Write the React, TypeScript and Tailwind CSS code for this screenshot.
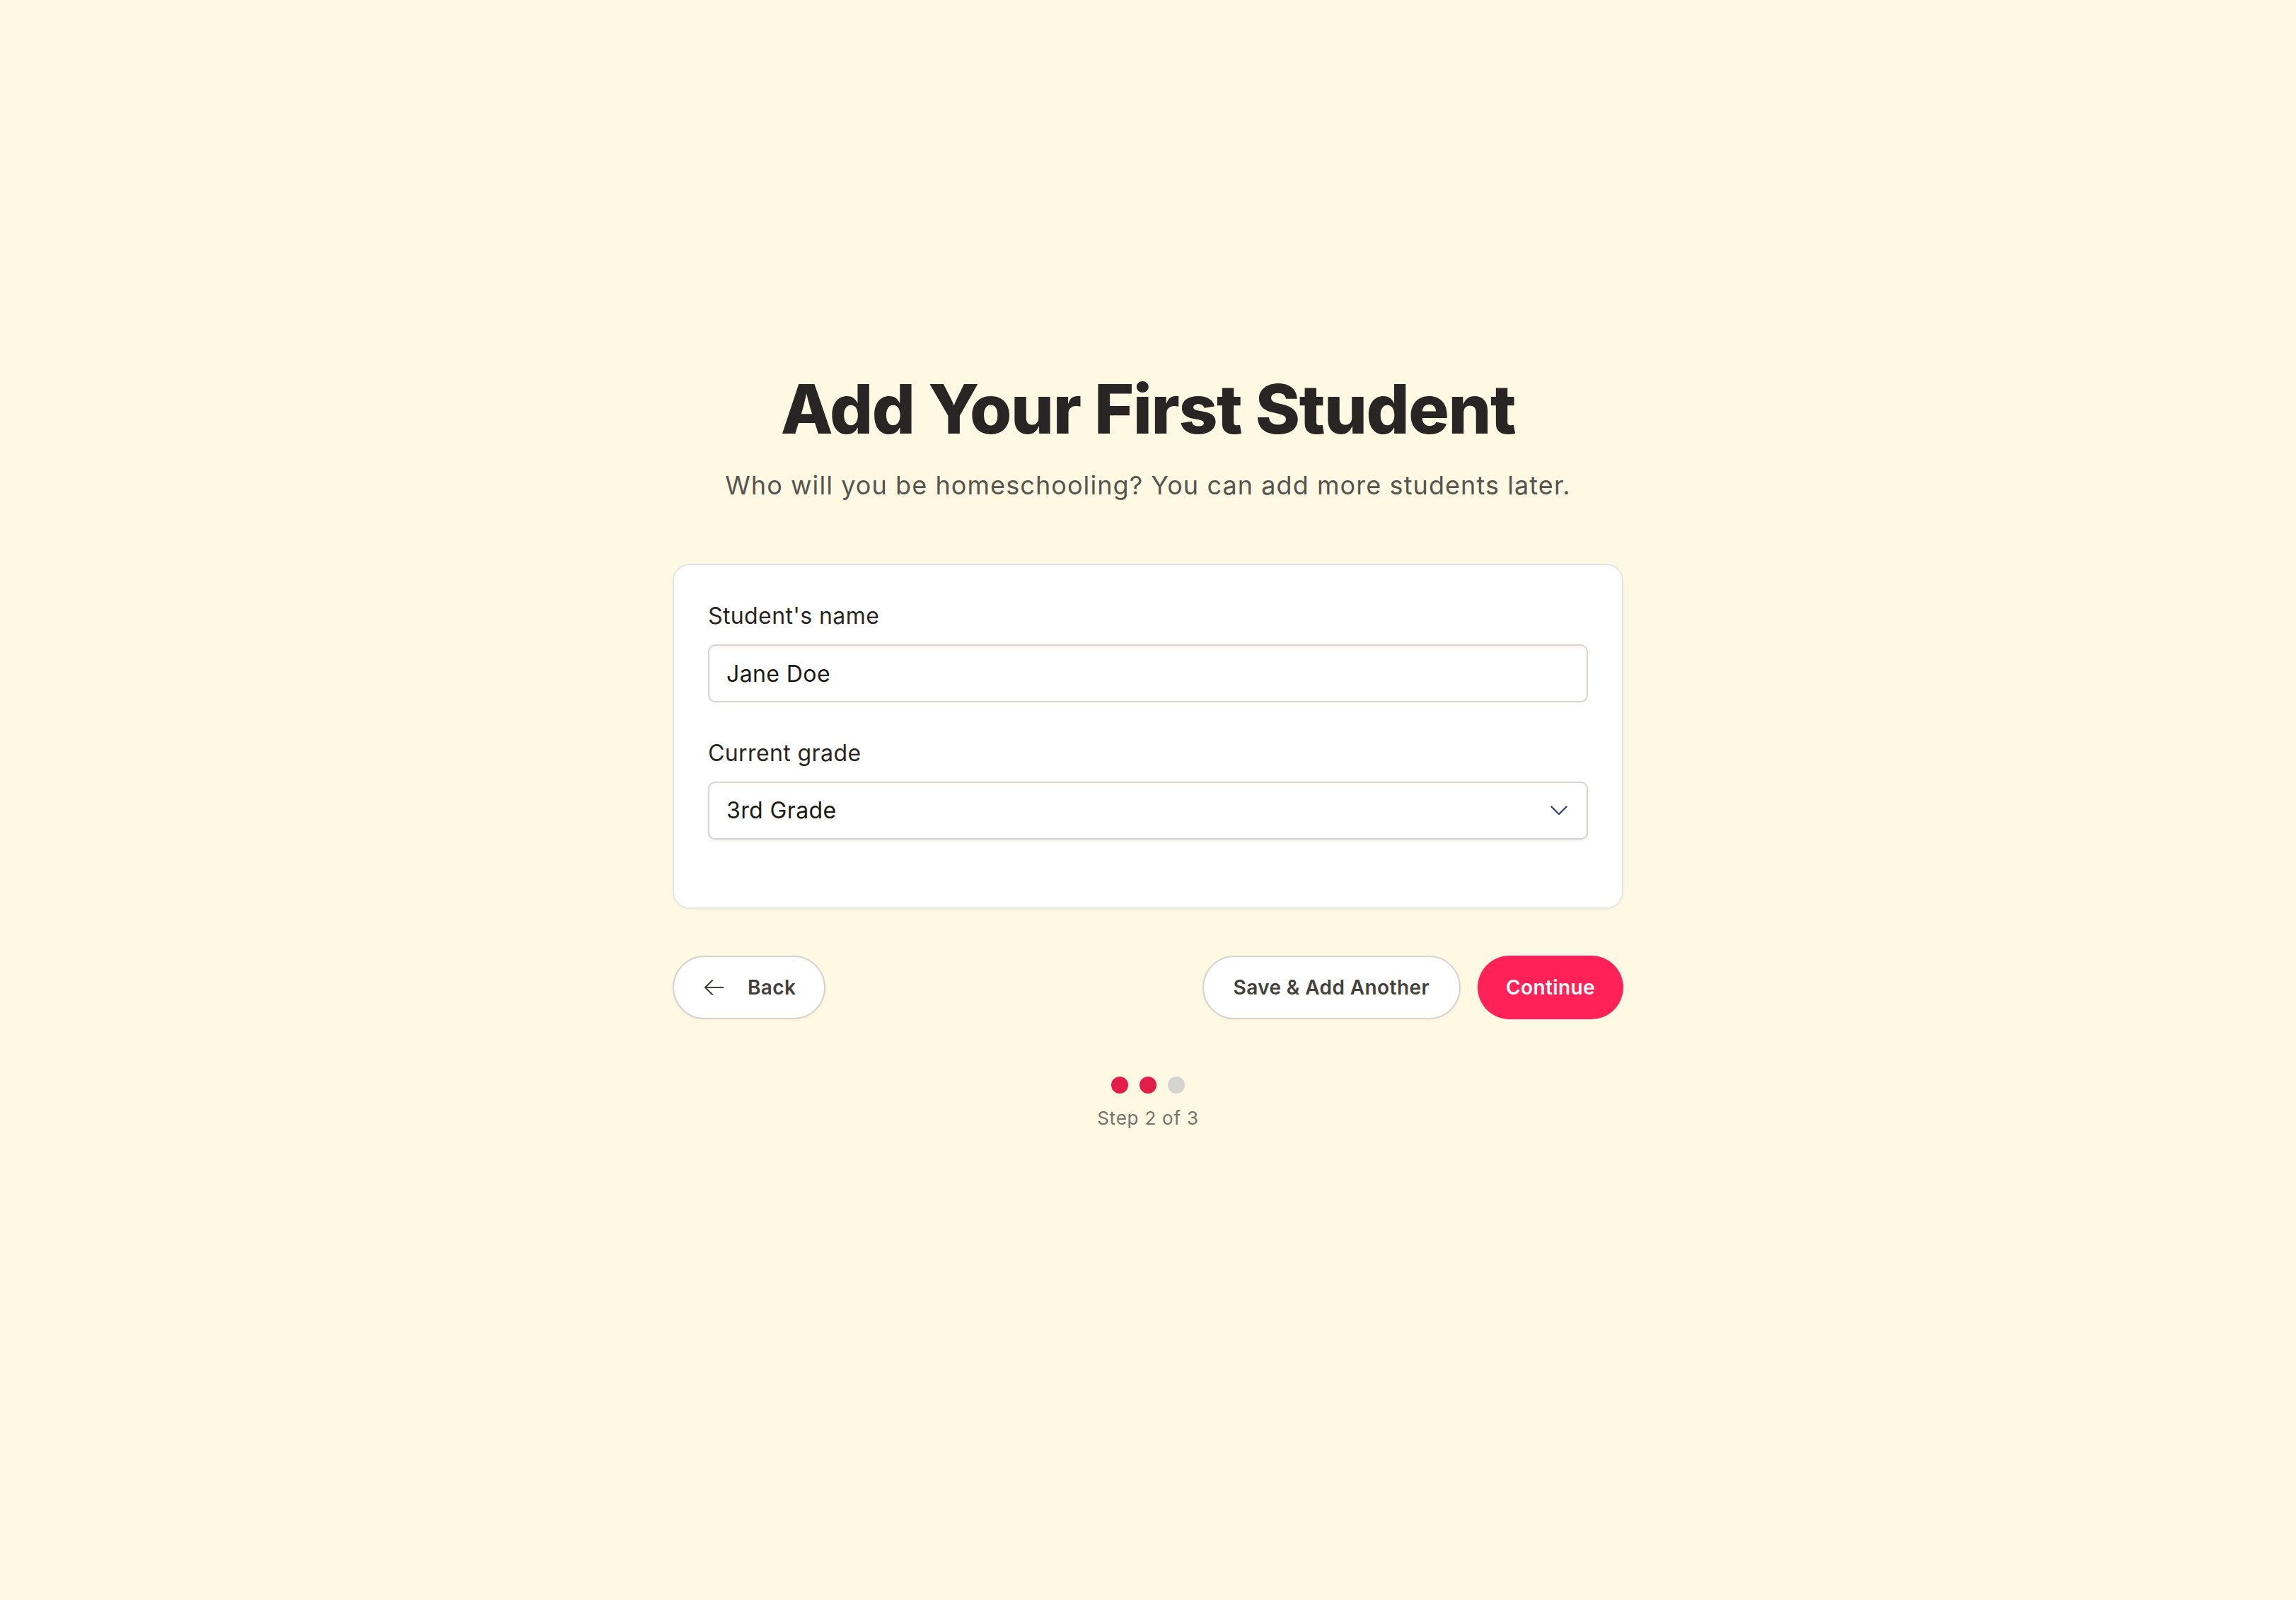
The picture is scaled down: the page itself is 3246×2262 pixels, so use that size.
import React, { useState } from 'react';

const grades = [
  'Kindergarten',
  '1st Grade',
  '2nd Grade',
  '3rd Grade',
  '4th Grade',
  '5th Grade',
  '6th Grade',
  '7th Grade',
  '8th Grade',
];

const ArrowLeft = () => (
  <svg width="28" height="24" viewBox="0 0 28 24" fill="none" stroke="#44403c" strokeWidth={2.2} strokeLinecap="round" strokeLinejoin="round">
    <path d="M27 12H2" />
    <path d="M12 2 2 12l10 10" />
  </svg>
);

const Chevron = () => (
  <svg width="24" height="14" viewBox="0 0 24 14" fill="none" stroke="#33457a" strokeWidth={2.4} strokeLinecap="round" strokeLinejoin="round">
    <path d="M1.5 1.5 12 12 22.5 1.5" />
  </svg>
);

const StepDots: React.FC<{ current: number; total: number }> = ({ current, total }) => (
  <div className="mt-[81px] flex flex-col items-center">
    <div className="flex gap-4">
      {Array.from({ length: total }).map((_, i) => (
        <span
          key={i}
          className={i < current ? 'h-6 w-6 rounded-full bg-[#e11d48]' : 'h-6 w-6 rounded-full bg-[#d6d3d1]'}
        />
      ))}
    </div>
    <p className="mt-[19px] text-[26px] leading-[32px] tracking-[0.03em] text-[#78716c]">
      Step {current} of {total}
    </p>
  </div>
);

export default function App() {
  const [name, setName] = useState('Jane Doe');
  const [grade, setGrade] = useState('3rd Grade');

  return (
    <div className="min-h-screen w-full bg-[#fff8e2] font-['Inter',sans-serif] tracking-[0.025em] text-[#292524]">
      <div className="mx-auto flex w-[1344px] flex-col pt-[530px] pb-40">
        <h1 className="text-center text-[96px] leading-[96px] font-extrabold tracking-[-0.015em] text-[#292524]">
          Add Your First Student
        </h1>
        <p className="mt-8 text-center text-[36px] leading-[56px] tracking-[0.03em] text-[#57534e]">
          Who will you be homeschooling? You can add more students later.
        </p>

        {/* student form */}
        <div className="mt-[83px] rounded-[24px] border-2 border-[#e7e5e4] bg-white px-12 pt-12 pb-[96px] shadow-[0_2px_4px_rgba(0,0,0,0.03)]">
          <div className="flex flex-col gap-12">
            <div>
              <label className="mb-4 block text-[32px] leading-[48px] text-[#292524]">Student's name</label>
              <input
                value={name}
                onChange={(e) => setName(e.target.value)}
                className="block h-[82px] w-full rounded-[10px] border-2 border-[#d6d3d1] bg-white px-6 text-[32px] text-[#1c1917] shadow-[inset_0_3px_5px_rgba(0,0,0,0.04)] outline-none"
              />
            </div>
            <div>
              <label className="mb-4 block text-[32px] leading-[48px] text-[#292524]">Current grade</label>
              <div className="relative">
                <select
                  value={grade}
                  onChange={(e) => setGrade(e.target.value)}
                  className="block h-[82px] w-full appearance-none rounded-[10px] border-2 border-[#d6d3d1] bg-white px-6 text-[32px] text-[#1c1917] shadow-[0_2px_4px_rgba(0,0,0,0.08)] outline-none"
                >
                  {grades.map((g) => (
                    <option key={g}>{g}</option>
                  ))}
                </select>
                <span className="pointer-events-none absolute top-1/2 right-[29px] -translate-y-1/2">
                  <Chevron />
                </span>
              </div>
            </div>
          </div>
        </div>

        {/* navigation */}
        <div className="mt-[66px] flex items-center justify-between">
          <button className="flex h-[90px] items-center gap-[34px] rounded-full border-2 border-[#d6d3d1] bg-white pr-[40px] pl-[42px] text-[28px] font-semibold text-[#44403c] shadow-[0_2px_4px_rgba(0,0,0,0.04)]">
            <ArrowLeft />
            Back
          </button>
          <div className="flex items-center gap-6">
            <button className="h-[90px] rounded-full border-2 border-[#d6d3d1] bg-white px-[42px] text-[28px] font-semibold text-[#44403c] shadow-[0_2px_4px_rgba(0,0,0,0.04)]">
              Save &amp; Add Another
            </button>
            <button className="h-[90px] rounded-full bg-[#ff2157] px-[40px] text-[28px] font-semibold text-white">
              Continue
            </button>
          </div>
        </div>

        <StepDots current={2} total={3} />
      </div>
    </div>
  );
}
